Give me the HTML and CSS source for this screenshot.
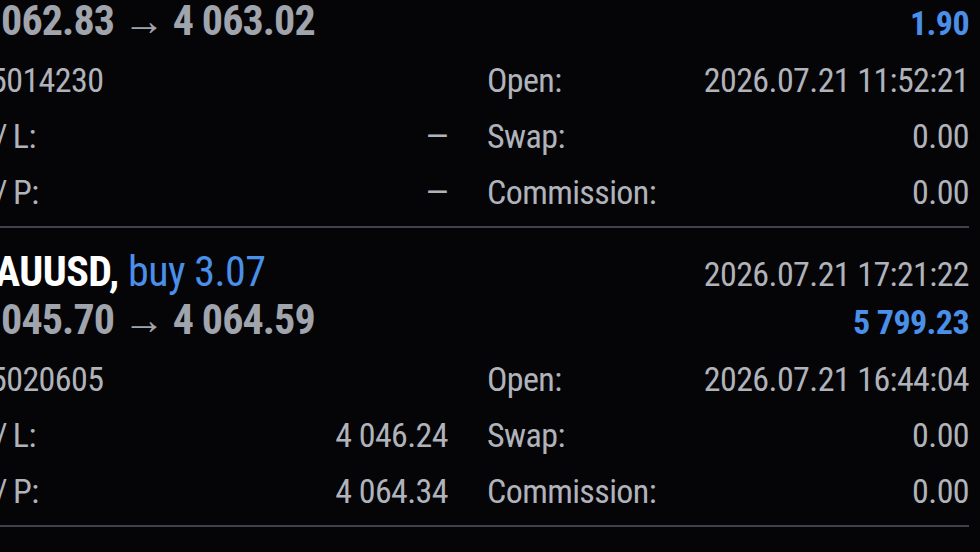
FILE: index.html
```html
<!DOCTYPE html>
<html>
<head>
    <title>Positions</title>
    <link rel="stylesheet" href="styles.css">
</head>
<body>
    <div class="list">
        <div class="trade">
            <div class="head">
                <div class="title">XAUUSD, <span class="side">buy 1.00</span></div>
                <div class="time">2026.07.21 11:58:40</div>
            </div>
            <div class="head">
                <div class="prices">4 062.83 → 4 063.02</div>
                <div class="profit">1.90</div>
            </div>
            <div class="details">
                <div class="row"><span>#5014230</span><span></span></div>
                <div class="row"><span>Open:</span><span>2026.07.21 11:52:21</span></div>
                <div class="row"><span>S&#8201;/&#8201;L:</span><span>—</span></div>
                <div class="row"><span>Swap:</span><span>0.00</span></div>
                <div class="row"><span>T&#8201;/&#8201;P:</span><span>—</span></div>
                <div class="row"><span>Commission:</span><span>0.00</span></div>
            </div>
        </div>

        <div class="trade">
            <div class="head">
                <div class="title">XAUUSD, <span class="side">buy 3.07</span></div>
                <div class="time">2026.07.21 17:21:22</div>
            </div>
            <div class="head">
                <div class="prices">4 045.70 → 4 064.59</div>
                <div class="profit">5 799.23</div>
            </div>
            <div class="details">
                <div class="row"><span>#5020605</span><span></span></div>
                <div class="row"><span>Open:</span><span>2026.07.21 16:44:04</span></div>
                <div class="row"><span>S&#8201;/&#8201;L:</span><span>4 046.24</span></div>
                <div class="row"><span>Swap:</span><span>0.00</span></div>
                <div class="row"><span>T&#8201;/&#8201;P:</span><span>4 064.34</span></div>
                <div class="row"><span>Commission:</span><span>0.00</span></div>
            </div>
        </div>

        <div class="trade">
            <div class="head">
                <div class="title">XAUUSD, <span class="side">buy 2.00</span></div>
                <div class="time">2026.07.21 17:30:05</div>
            </div>
        </div>
    </div>
</body>
</html>
```

FILE: styles.css
```css
body {
    margin: 0;
    background-color: #050508;
    color: #b0b3ba;
    font-family: "Roboto Condensed", Roboto, "Liberation Sans", sans-serif;
    letter-spacing: -0.6px;
    overflow: hidden;
}

.list {
    margin-top: -71px;
    margin-left: -28px;
    padding-right: 11px;
}

.trade {
    padding: 20px 0 6px 0;
    border-bottom: 2px solid #40424a;
}

.head {
    display: flex;
    justify-content: space-between;
    align-items: baseline;
    height: 48px;
    line-height: 48px;
}

.title {
    font-size: 42px;
    font-weight: bold;
    color: #ffffff;
    letter-spacing: -0.5px;
}

.side {
    font-weight: normal;
    color: #4a8fe8;
}

.time {
    font-size: 34px;
}

.prices {
    font-size: 42px;
    font-weight: bold;
    color: #a0a4ac;
    letter-spacing: -0.9px;
}

.profit {
    font-size: 34px;
    font-weight: bold;
    color: #4a8fe8;
}

.details {
    margin-top: 7px;
    display: grid;
    grid-template-columns: 476px 1fr;
    column-gap: 39px;
    font-size: 34px;
    line-height: 56px;
}

.row {
    display: flex;
    justify-content: space-between;
}
```
